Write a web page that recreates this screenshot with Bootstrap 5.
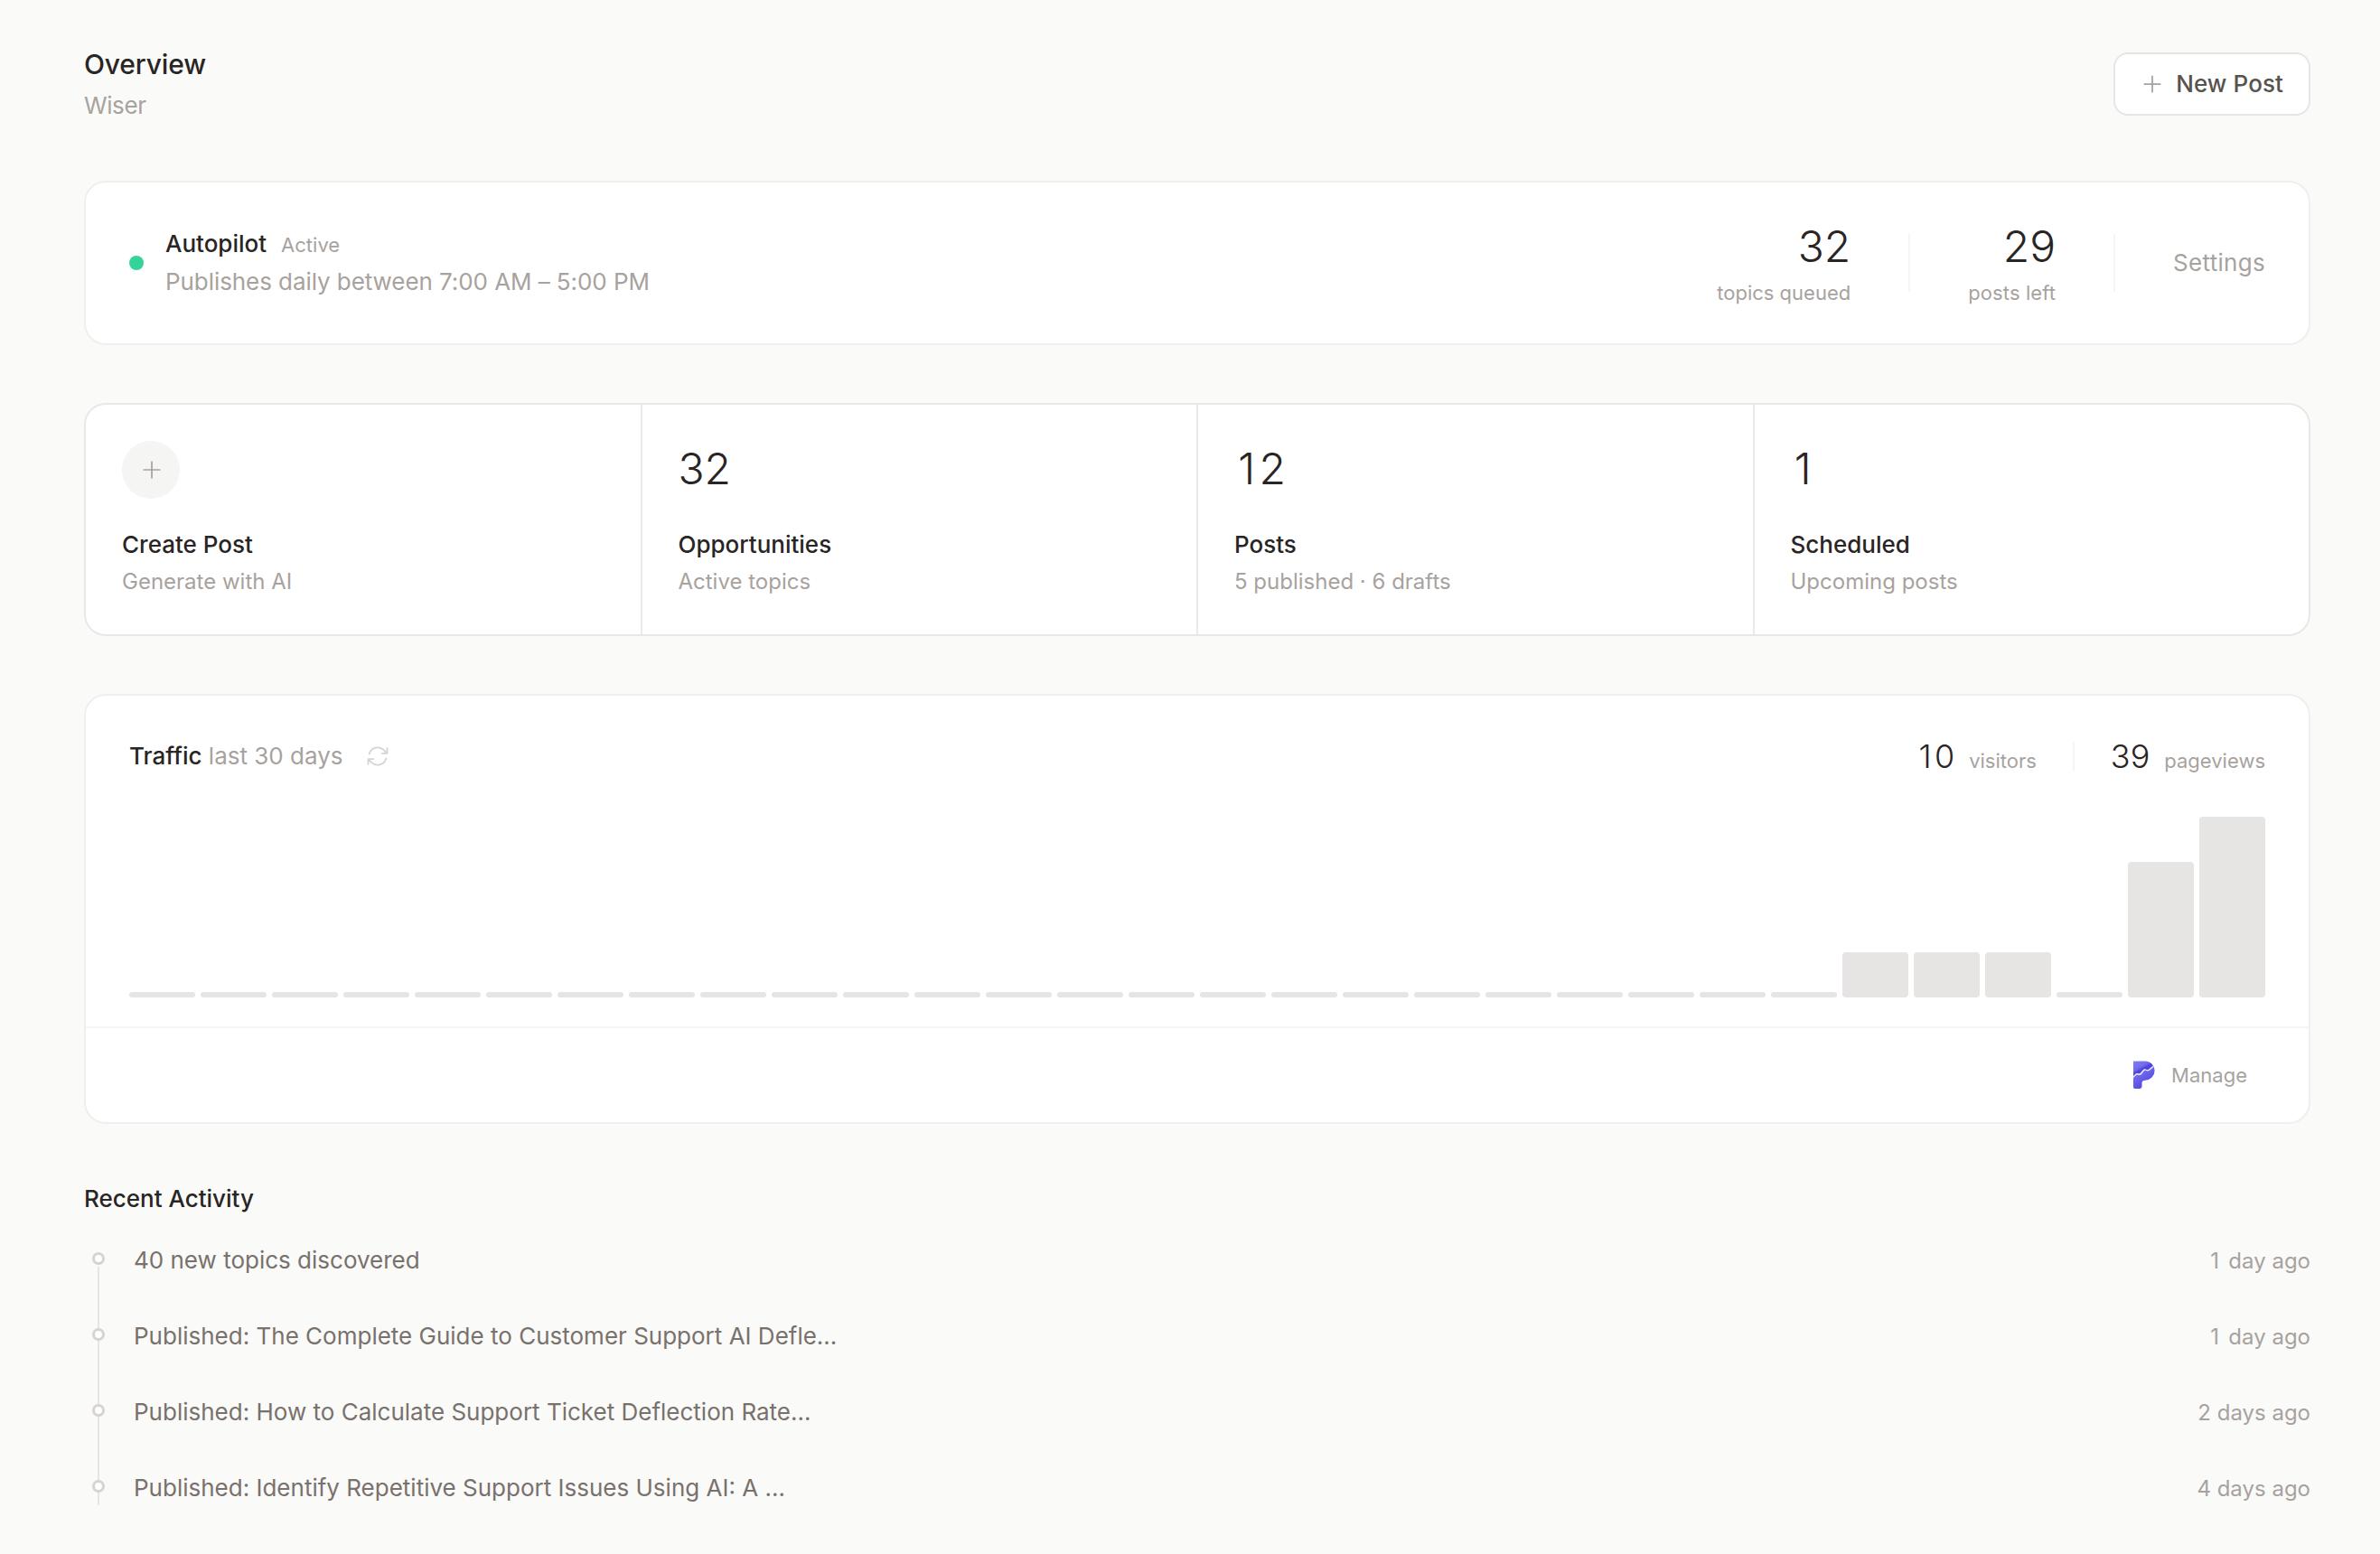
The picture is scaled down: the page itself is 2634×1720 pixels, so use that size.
<!DOCTYPE html>
<html lang="en">
<head>
<meta charset="utf-8">
<title>Overview</title>
<link rel="stylesheet" href="https://cdn.jsdelivr.net/npm/bootstrap@5.3.0/dist/css/bootstrap.min.css">
<style>
:root{--ink:#292524;--mid:#78716c;--soft:#a8a29e;--line:#e7e5e4;--faint:#f0efee}
body{font:400 26px/39px Inter,"Liberation Sans",sans-serif;background:#fafaf9;color:var(--ink);-webkit-font-smoothing:antialiased}
.page{padding:49px 77px 0 93px}
.ttl{font-size:30px;line-height:45px;font-weight:500;letter-spacing:-.15px}
.site{margin-top:3px;letter-spacing:-.4px}
.med{font-size:26px;line-height:39px;font-weight:500}
.soft{color:var(--soft)}
.t22{font-size:22px;line-height:33px}
.t24{font-size:24px;line-height:36px}
.btn-new{font-size:26px;line-height:38px;font-weight:450;letter-spacing:.1px;padding:14px 28px 14px 27px;border:2px solid var(--line);border-radius:16px;background:#fff;color:#57534e;gap:12px}
.panel{background:#fff;border:2px solid var(--faint);border-radius:24px}
.icon{width:28px;height:28px;fill:none;stroke:currentColor;stroke-width:1.5;stroke-linecap:round;stroke-linejoin:round;flex:none;display:block}
.pilot{height:182px;margin-top:64px;padding:0 48px}
.pilot-text{padding-bottom:2px}
.hours{margin-top:3px;letter-spacing:-.07px}
.dot{width:16px;height:16px;background:#34d399}
.num{font-size:48px;line-height:62px;font-weight:300}
.num-s{font-size:36px;line-height:54px;font-weight:300}
.one{padding:0 .09em}
.left-label{letter-spacing:.1px}
.settings{letter-spacing:.3px;padding-bottom:2px}
.rule{width:2px;background:#f5f5f4}
.rule-lg{height:64px}.rule-sm{height:32px}
.gap64{gap:64px}.gap40{gap:40px}
.stats{margin-top:64px;display:grid;grid-template-columns:repeat(4,1fr);gap:2px;background:#ebeae9;border-color:#e9e8e7;overflow:hidden}
.stat{background:#fff;padding:40px;height:254px}
.stat-top{height:64px;margin-bottom:31px}
.stat-top .num{line-height:61px}
.disc{width:64px;height:64px;background:#f5f5f4;padding-left:1px}
.traffic{margin-top:64px}
.traffic-main{padding:40px 48px 32px}
.traffic-title{padding-bottom:2px}
.refresh{color:#d6d3d1}
.bars{height:200px;gap:6px;margin-top:40px}
.bars>i{flex:1 1 0;background:#e6e5e3;border-radius:4px;min-height:6px}
.traffic-foot{height:106px;border-top:2px solid #f5f5f4;padding:0 68px}
.recent{margin-top:63px}
.feed{position:relative;margin-top:29px}
.feed::before{content:"";position:absolute;left:15px;top:27px;width:2px;height:264px;background:var(--line)}
.feed-row{height:39px;margin-bottom:45px;padding-left:9px;color:var(--mid)}
.node{position:relative;width:14px;height:14px;border:3px solid #d6d3d1;background:#fff;margin:-3px 32px 0 0}
.ago{padding-top:2px}
.ago .one{padding:0 3.5px 0 0}
</style>
</head>
<body>
<main class="page">
  <header class="d-flex align-items-center justify-content-between">
    <div>
      <h1 class="ttl mb-0">Overview</h1>
      <div class="soft site">Wiser</div>
    </div>
    <button class="btn btn-new d-flex align-items-center">
      <svg class="icon soft" viewBox="0 0 24 24"><path d="M12 4.5v15m7.5-7.5h-15"/></svg>New Post
    </button>
  </header>

  <section class="panel pilot d-flex align-items-center">
    <span class="dot rounded-circle me-4"></span>
    <div class="pilot-text me-auto">
      <div class="d-flex align-items-baseline gap-3"><span class="med">Autopilot</span><span class="t22 soft">Active</span></div>
      <div class="soft hours">Publishes daily between 7:00 AM – 5:00 PM</div>
    </div>
    <div class="d-flex align-items-center gap64">
      <div class="text-end"><div class="num">32</div><div class="t22 soft mt-1">topics queued</div></div>
      <span class="rule rule-lg"></span>
      <div class="text-end"><div class="num">29</div><div class="t22 soft mt-1 left-label">posts left</div></div>
      <span class="rule rule-lg"></span>
      <a class="soft text-decoration-none settings">Settings</a>
    </div>
  </section>

  <section class="panel stats">
    <div class="stat">
      <div class="stat-top"><span class="disc rounded-circle d-flex align-items-center justify-content-center"><svg class="icon soft" viewBox="0 0 24 24"><path d="M12 4.5v15m7.5-7.5h-15"/></svg></span></div>
      <div class="med">Create Post</div><div class="t24 soft mt-1">Generate with AI</div>
    </div>
    <div class="stat">
      <div class="stat-top"><div class="num">32</div></div>
      <div class="med">Opportunities</div><div class="t24 soft mt-1">Active topics</div>
    </div>
    <div class="stat">
      <div class="stat-top"><div class="num"><span class="one">1</span>2</div></div>
      <div class="med">Posts</div><div class="t24 soft mt-1">5 published · 6 drafts</div>
    </div>
    <div class="stat">
      <div class="stat-top"><div class="num"><span class="one">1</span></div></div>
      <div class="med">Scheduled</div><div class="t24 soft mt-1">Upcoming posts</div>
    </div>
  </section>

  <section class="panel traffic">
    <div class="traffic-main">
      <div class="d-flex align-items-center justify-content-between">
        <div class="d-flex align-items-center gap-4">
          <div class="traffic-title"><span class="med">Traffic</span> <span class="soft">last 30 days</span></div>
          <svg class="icon refresh" viewBox="0 0 24 24"><path d="M16.023 9.348h4.992v-.001M2.985 19.644v-4.992m0 0h4.992m-4.993 0l3.181 3.183a8.25 8.25 0 0013.803-3.7M4.031 9.865a8.25 8.25 0 0113.803-3.7l3.181 3.182m0-4.991v4.99"/></svg>
        </div>
        <div class="d-flex align-items-center gap40">
          <div class="d-flex align-items-baseline gap-3"><span class="num-s"><span class="one">1</span>0</span><span class="t22 soft">visitors</span></div>
          <span class="rule rule-sm"></span>
          <div class="d-flex align-items-baseline gap-3"><span class="num-s">39</span><span class="t22 soft">pageviews</span></div>
        </div>
      </div>
      <div class="bars d-flex align-items-end" id="bars"></div>
    </div>
    <div class="traffic-foot d-flex align-items-center justify-content-end gap-3">
      <svg width="32" height="32" viewBox="0 0 32 32">
        <defs>
          <linearGradient id="pa" x1="0" y1="0" x2="1" y2="1"><stop offset="0" stop-color="#8a86f2"/><stop offset=".42" stop-color="#6f6aec"/><stop offset=".5" stop-color="#5145dc"/><stop offset="1" stop-color="#4a3cd8"/></linearGradient>
          <linearGradient id="pb" x1="0" y1="0" x2=".7" y2="1"><stop offset="0" stop-color="#837ff0"/><stop offset=".45" stop-color="#6a63ea"/><stop offset="1" stop-color="#4b3cd9"/></linearGradient>
          <clipPath id="pc"><path d="M6 .5H19A10.6 10.6 0 0 1 19 21.700Q15.500 21.700 15.500 25V28Q15.500 31 12.500 31H8Q6 31 6 29Z"/></clipPath>
        </defs>
        <g clip-path="url(#pc)">
          <path fill="url(#pa)" d="M0 0H32V7L26 7.500L23 11L19 9.500L14 15L10 13.800L6 18H0Z"/>
          <path fill="url(#pb)" d="M32 6L27.500 7.500L23.500 11L19 10L14.500 15.500L10.500 14.500L6 18.500V32H32Z"/>
          <path fill="none" stroke="#e9e8fc" stroke-width="1.300" stroke-linejoin="round" d="M5 19L8.500 15.500Q10 14.200 11.500 15.200Q13 16 14.500 14L17 10.800Q18.500 9.300 20 10.300Q22 11.500 23.500 10L29 5.500"/>
        </g>
      </svg>
      <span class="t22 soft">Manage</span>
    </div>
  </section>

  <h2 class="med mb-0 recent">Recent Activity</h2>
  <div class="feed">
    <div class="feed-row d-flex align-items-center"><span class="node rounded-circle"></span><span class="me-auto">40 new topics discovered</span><span class="ago t24 soft"><span class="one">1</span> day ago</span></div>
    <div class="feed-row d-flex align-items-center"><span class="node rounded-circle"></span><span class="me-auto">Published: The Complete Guide to Customer Support AI Defle...</span><span class="ago t24 soft"><span class="one">1</span> day ago</span></div>
    <div class="feed-row d-flex align-items-center"><span class="node rounded-circle"></span><span class="me-auto">Published: How to Calculate Support Ticket Deflection Rate...</span><span class="ago t24 soft">2 days ago</span></div>
    <div class="feed-row mb-0 d-flex align-items-center"><span class="node rounded-circle"></span><span class="me-auto">Published: Identify Repetitive Support Issues Using AI: A ...</span><span class="ago t24 soft">4 days ago</span></div>
  </div>
</main>
<script>
const views=[...Array(24).fill(0),25,25,25,0,75,100];
document.getElementById('bars').innerHTML=views.map(v=>`<i style="height:${v}%"></i>`).join('');
</script>
<script src="https://cdn.jsdelivr.net/npm/bootstrap@5.3.0/dist/js/bootstrap.bundle.min.js"></script>
</body>
</html>
